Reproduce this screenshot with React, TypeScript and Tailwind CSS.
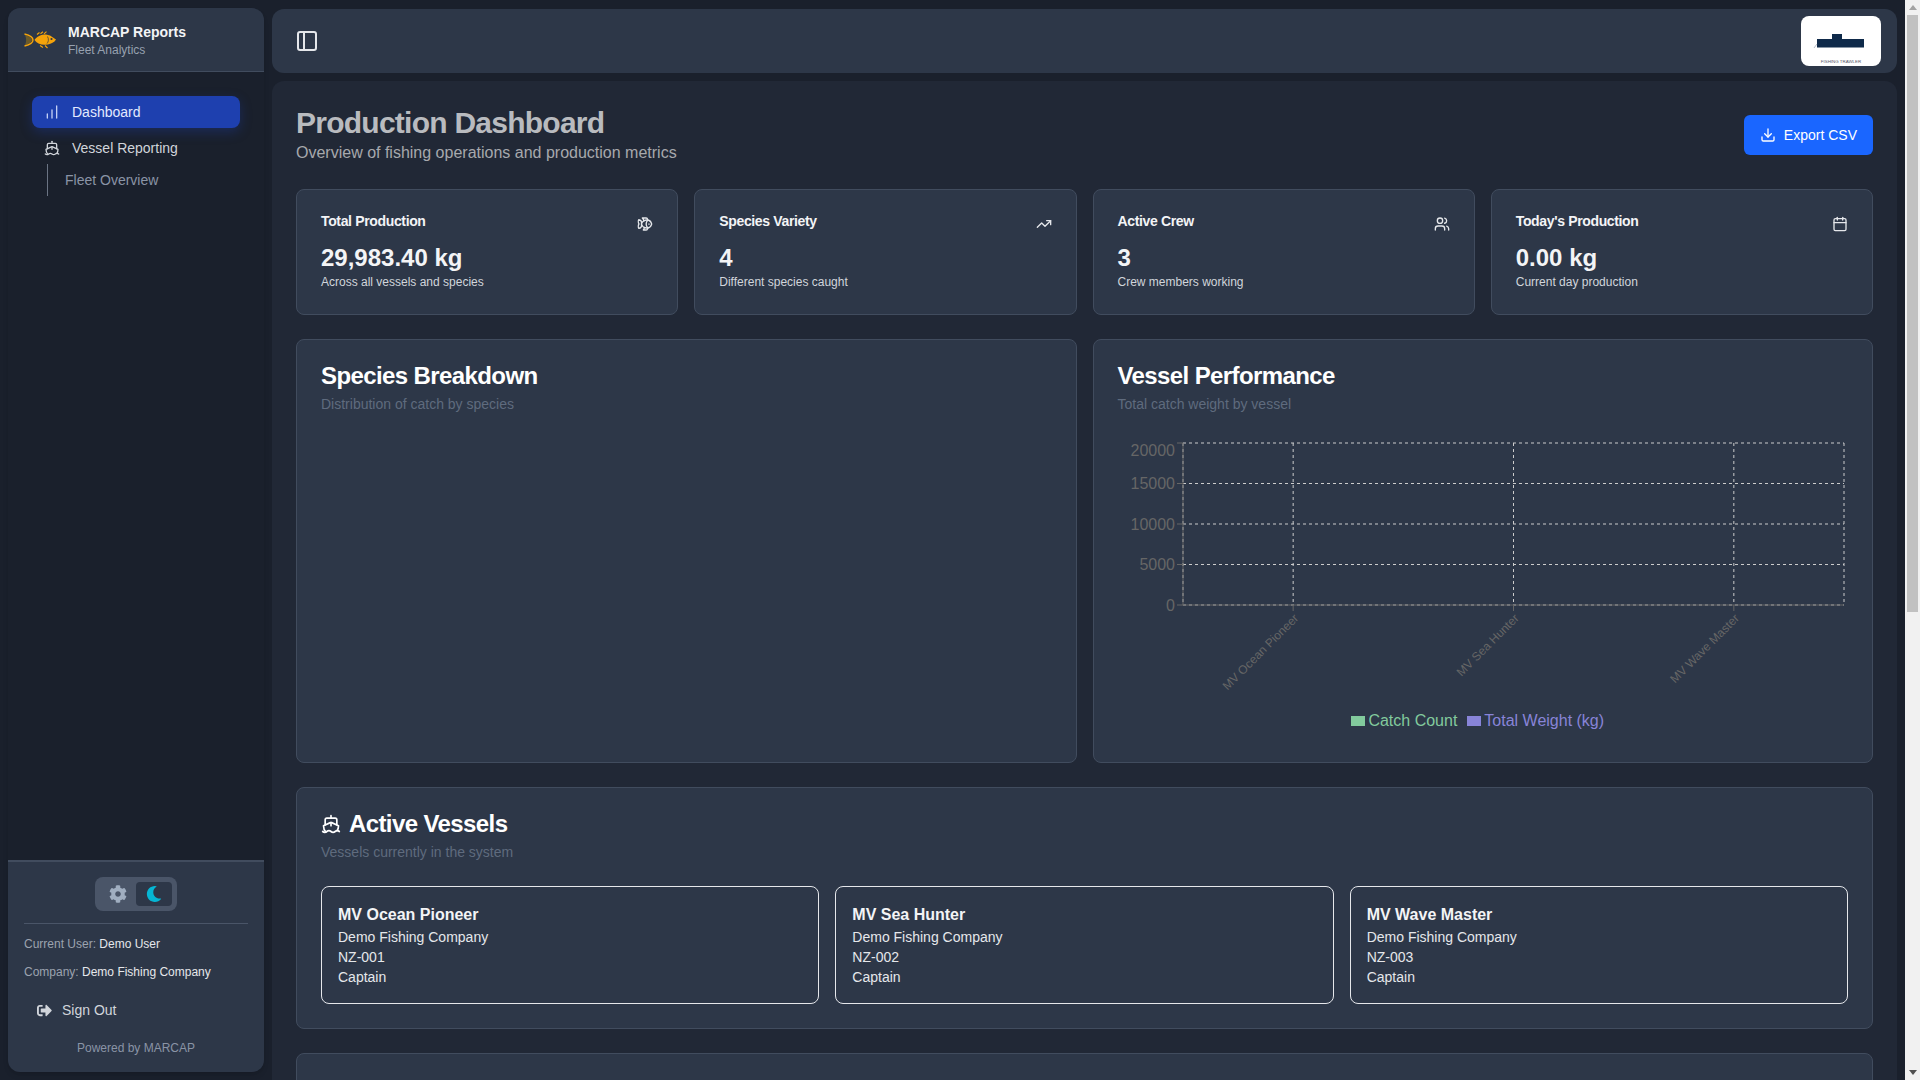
import { Calendar, ChartNoAxesColumnIncreasing, Download, Fish, PanelLeft, Ship, TrendingUp, Users } from "lucide-react";
import { FaCog, FaMoon, FaSignOutAlt } from "react-icons/fa";

const stats = [
  { title: "Total Production", value: "29,983.40 kg", note: "Across all vessels and species", icon: Fish },
  { title: "Species Variety", value: "4", note: "Different species caught", icon: TrendingUp },
  { title: "Active Crew", value: "3", note: "Crew members working", icon: Users },
  { title: "Today's Production", value: "0.00 kg", note: "Current day production", icon: Calendar },
];

const vessels = [
  { name: "MV Ocean Pioneer", reg: "NZ-001" },
  { name: "MV Sea Hunter", reg: "NZ-002" },
  { name: "MV Wave Master", reg: "NZ-003" },
];

const Logo = () => (
  <svg viewBox="0 0 32 18" className="h-[18px] w-8 shrink-0" fill="#f5a30a">
    <path d="M10.500 9C12.500 5.500 17 3.500 22 3.500L26 4.500 32 8.500 30.500 10.500C28 12.500 25 13.500 21 13.800 16.500 14 12.500 12 10.500 9Z" />
    <path d="M1 4C5 5 8 7 8 9 8 11 5 13 1 14 2.500 11 2.500 7 1 4Z" fill="#6b5a2a" />
    <path d="M0.500 3C5 4 9 6 9 9 9 12 5 14 0.500 15" fill="none" stroke="#f5a30a" strokeWidth="1.400" />
    <path d="M13 3.500 15.500 1.500M16.500 2.800 19 0.800M20 2.800 22.500 0.600M16 14.500 19 16.500M21 14.500 23.500 17" fill="none" stroke="#f5a30a" strokeWidth="1.100" />
    <circle cx="27.500" cy="8" r="1.100" fill="#2d3748" />
    <path d="M23.500 5.500C25 8 24.500 11 23 12.500" fill="none" stroke="#2d3748" strokeWidth="0.700" />
  </svg>
);

const Trawler = () => (
  <div className="h-[50px] w-20 overflow-hidden rounded-lg bg-white">
    <svg viewBox="0 0 80 50" className="h-full w-full">
      <rect x="16" y="23" width="47" height="8.500" fill="#0f2a4a" />
      <rect x="31" y="18" width="10" height="5" fill="#0f2a4a" />
      <path d="M16 28 13 32" stroke="#8894a4" strokeWidth="0.600" />
      <text x="40" y="47" textAnchor="middle" fontSize="4.400" fill="#556" fontFamily="Liberation Sans">FISHING TRAWLER</text>
    </svg>
  </div>
);

const VesselChart = () => {
  const ys = [5, 45.5, 86, 126.5, 167];
  const xs = [65, 175.17, 395.5, 615.83, 726];
  const ticks = [
    { label: "20000", y: 12, tick: 5 },
    { label: "15000", y: 45.5, tick: 45.5 },
    { label: "10000", y: 86, tick: 86 },
    { label: "5000", y: 126.5, tick: 126.5 },
    { label: "0", y: 167, tick: 167 },
  ];
  const names = [
    { name: "MV Ocean Pioneer", x: 175.17 },
    { name: "MV Sea Hunter", x: 395.5 },
    { name: "MV Wave Master", x: 615.83 },
  ];
  return (
    <div className="h-[300px] w-full">
      <svg width="730" height="262" className="block">
        {ys.map((y) => (
          <line key={y} x1="65" x2="726" y1={y} y2={y} stroke="#ccc" strokeDasharray="3 3" />
        ))}
        {xs.map((x) => (
          <line key={x} x1={x} x2={x} y1="5" y2="167" stroke="#ccc" strokeDasharray="3 3" />
        ))}
        <line x1="65" x2="65" y1="5" y2="167" stroke="#666" />
        <line x1="65" x2="726" y1="167" y2="167" stroke="#666" />
        {ticks.map((t) => (
          <g key={t.label}>
            <line x1="59" x2="65" y1={t.tick} y2={t.tick} stroke="#666" />
            <text x="57" y={t.y} dy="0.355em" textAnchor="end" fontSize="16" fill="#666">
              {t.label}
            </text>
          </g>
        ))}
        {names.map((n) => (
          <g key={n.name}>
            <line x1={n.x} x2={n.x} y1="167" y2="173" stroke="#666" />
            <text x={n.x} y="175" textAnchor="end" fontSize="12" fill="#666" transform={`rotate(-45 ${n.x} 175)`}>
              <tspan x={n.x} dy="0.71em">
                {n.name}
              </tspan>
            </text>
          </g>
        ))}
      </svg>
      <div className="flex justify-center pt-[9px] text-base leading-6">
        <div className="mr-2.5 flex items-center text-[#82ca9d]">
          <span className="mr-[3px] h-2.5 w-3.5 bg-[#82ca9d]" />
          Catch Count
        </div>
        <div className="mr-2.5 flex items-center text-[#8884d8]">
          <span className="mr-[3px] h-2.5 w-3.5 bg-[#8884d8]" />
          Total Weight (kg)
        </div>
      </div>
    </div>
  );
};

const ChartCard = ({ title, subtitle, children }: { title: string; subtitle: string; children?: React.ReactNode }) => (
  <div className="h-[424px] rounded-lg border border-[#414c5e] bg-[#2d3748] p-6">
    <h3 className="text-2xl leading-6 font-semibold tracking-tight text-white">{title}</h3>
    <p className="mt-1.5 text-sm text-[#5f6b7e]">{subtitle}</p>
    <div className="mt-6">{children}</div>
  </div>
);

// the window's own scrollbar, as it stands at the top of the page
const Scrollbar = () => (
  <div className="flex w-[15px] shrink-0 flex-col items-center justify-between bg-[#f1f1f1]">
    <div className="flex w-full flex-col items-center">
      <div className="flex h-[15px] items-center justify-center">
        <div className="h-0 w-0 border-x-4 border-b-[5px] border-x-transparent border-b-[#a3a3a3]" />
      </div>
      <div className="h-[597px] w-[11px] bg-[#c1c1c1]" />
    </div>
    <div className="flex h-[15px] items-center justify-center">
      <div className="h-0 w-0 border-x-4 border-t-[5px] border-x-transparent border-t-[#505050]" />
    </div>
  </div>
);

export default function App() {
  return (
    <div className="flex h-screen overflow-hidden bg-[#1a202c] font-['Liberation_Sans',sans-serif] text-white">
      {/* Sidebar */}
      <aside className="h-screen w-[272px] shrink-0 p-2">
        <div className="flex h-full flex-col overflow-hidden rounded-xl bg-[#1a202c] shadow-md">
          <div className="flex h-16 items-center gap-3 border-b border-[#414c5e] bg-[#2d3748] px-4">
            <Logo />
            <div>
              <p className="text-sm leading-5 font-semibold text-[#f3f4f6]">MARCAP Reports</p>
              <p className="text-xs leading-4 text-[#97a1b0]">Fleet Analytics</p>
            </div>
          </div>
          <nav className="flex-1 px-6 pt-6 text-sm">
            <a className="flex h-8 items-center gap-3 rounded-lg bg-[#1e40af] pl-3 text-[#e3eaff] shadow-[0_4px_12px_rgba(30,64,175,0.35)]">
              <ChartNoAxesColumnIncreasing size={16} strokeWidth={2} className="text-[#c3d0f5]" />
              Dashboard
            </a>
            <a className="mt-1 flex h-8 items-center gap-3 pl-3 text-[#d1d5db]">
              <Ship size={16} />
              Vessel Reporting
            </a>
            <div className="ml-[15px] flex h-8 items-center border-l border-[#6b7484] pl-[17px] text-[#8a94a6]">Fleet Overview</div>
          </nav>
          <div className="border-t-2 border-[#414c5e] bg-[#2d3748] px-4 pt-[15px]">
            <div className="flex justify-center border-b border-[#4a5568] pb-3">
              <div className="flex h-[34px] w-[82px] items-center justify-between rounded-lg bg-[#4a5568] pr-[5px] pl-[14px]">
                <FaCog size={18} className="text-[#a0aec0]" />
                <div className="flex h-6 w-9 items-center justify-center rounded bg-[#2d3748]">
                  <FaMoon size={16} className="text-[#06b6d4]" />
                </div>
              </div>
            </div>
            <p className="mt-3 text-xs leading-4 text-[#9ca3af]">
              Current User: <span className="text-[#e5e7eb]">Demo User</span>
            </p>
            <p className="mt-3 text-xs leading-4 text-[#9ca3af]">
              Company: <span className="text-[#e5e7eb]">Demo Fishing Company</span>
            </p>
            <div className="mt-3 flex h-9 items-center gap-2.5 pl-[13px] text-sm text-[#d1d5db]">
              <FaSignOutAlt size={15} />
              Sign Out
            </div>
            <p className="mt-3 pb-4 text-center text-xs leading-4 text-[#8a94a6]">Powered by MARCAP</p>
          </div>
        </div>
      </aside>

      {/* Main */}
      <div className="min-w-0 flex-1 overflow-hidden pt-[9px] pr-2">
        <header className="flex h-16 items-center justify-between rounded-xl bg-[#2d3748] pr-4 pl-[23px]">
          <PanelLeft size={24} strokeWidth={2} className="text-[#e5e7eb]" />
          <Trawler />
        </header>
        <main className="mt-2 rounded-xl bg-[#212836] p-6">
          <div className="flex items-center justify-between">
            <div>
              <h1 className="text-3xl font-bold tracking-tight text-[#b9bbbf]">Production Dashboard</h1>
              <p className="text-base text-[#a7a9ad]">Overview of fishing operations and production metrics</p>
            </div>
            <button className="flex h-10 items-center gap-2 rounded-md bg-[#1a66ff] px-4 text-sm text-white">
              <Download size={16} />
              Export CSV
            </button>
          </div>

          <div className="mt-6 grid grid-cols-4 gap-4">
            {stats.map((s) => (
              <div key={s.title} className="h-[126px] rounded-lg border border-[#414c5e] bg-[#2d3748] px-6 pt-[21px]">
                <div className="flex justify-between">
                  <p className="text-sm leading-5 font-semibold tracking-tight text-[#f3f4f6]">{s.title}</p>
                  <s.icon size={16} className="mt-[5px] text-[#e5e7eb]" />
                </div>
                <p className="mt-2.5 text-2xl leading-8 font-bold text-[#f3f4f6]">{s.value}</p>
                <p className="text-xs leading-4 text-[#d1d5db]">{s.note}</p>
              </div>
            ))}
          </div>

          <div className="mt-6 grid grid-cols-2 gap-4">
            <ChartCard title="Species Breakdown" subtitle="Distribution of catch by species" />
            <ChartCard title="Vessel Performance" subtitle="Total catch weight by vessel">
              <VesselChart />
            </ChartCard>
          </div>

          <section className="mt-6 rounded-lg border border-[#414c5e] bg-[#2d3748] p-6">
            <h3 className="flex items-center gap-2 text-2xl leading-6 font-semibold tracking-tight text-white">
              <Ship size={20} />
              Active Vessels
            </h3>
            <p className="mt-1.5 text-sm text-[#5f6b7e]">Vessels currently in the system</p>
            <div className="mt-6 grid grid-cols-3 gap-4">
              {vessels.map((v) => (
                <div key={v.name} className="rounded-lg border border-[#e5e7eb] p-4 text-sm leading-5 text-[#e5e7eb]">
                  <p className="text-base leading-6 font-semibold text-[#f3f4f6]">{v.name}</p>
                  <p>Demo Fishing Company</p>
                  <p>{v.reg}</p>
                  <p>Captain</p>
                </div>
              ))}
            </div>
          </section>

          <section className="mt-6 h-[780px] rounded-lg border border-[#414c5e] bg-[#2d3748]" />
        </main>
      </div>
      <Scrollbar />
    </div>
  );
}
